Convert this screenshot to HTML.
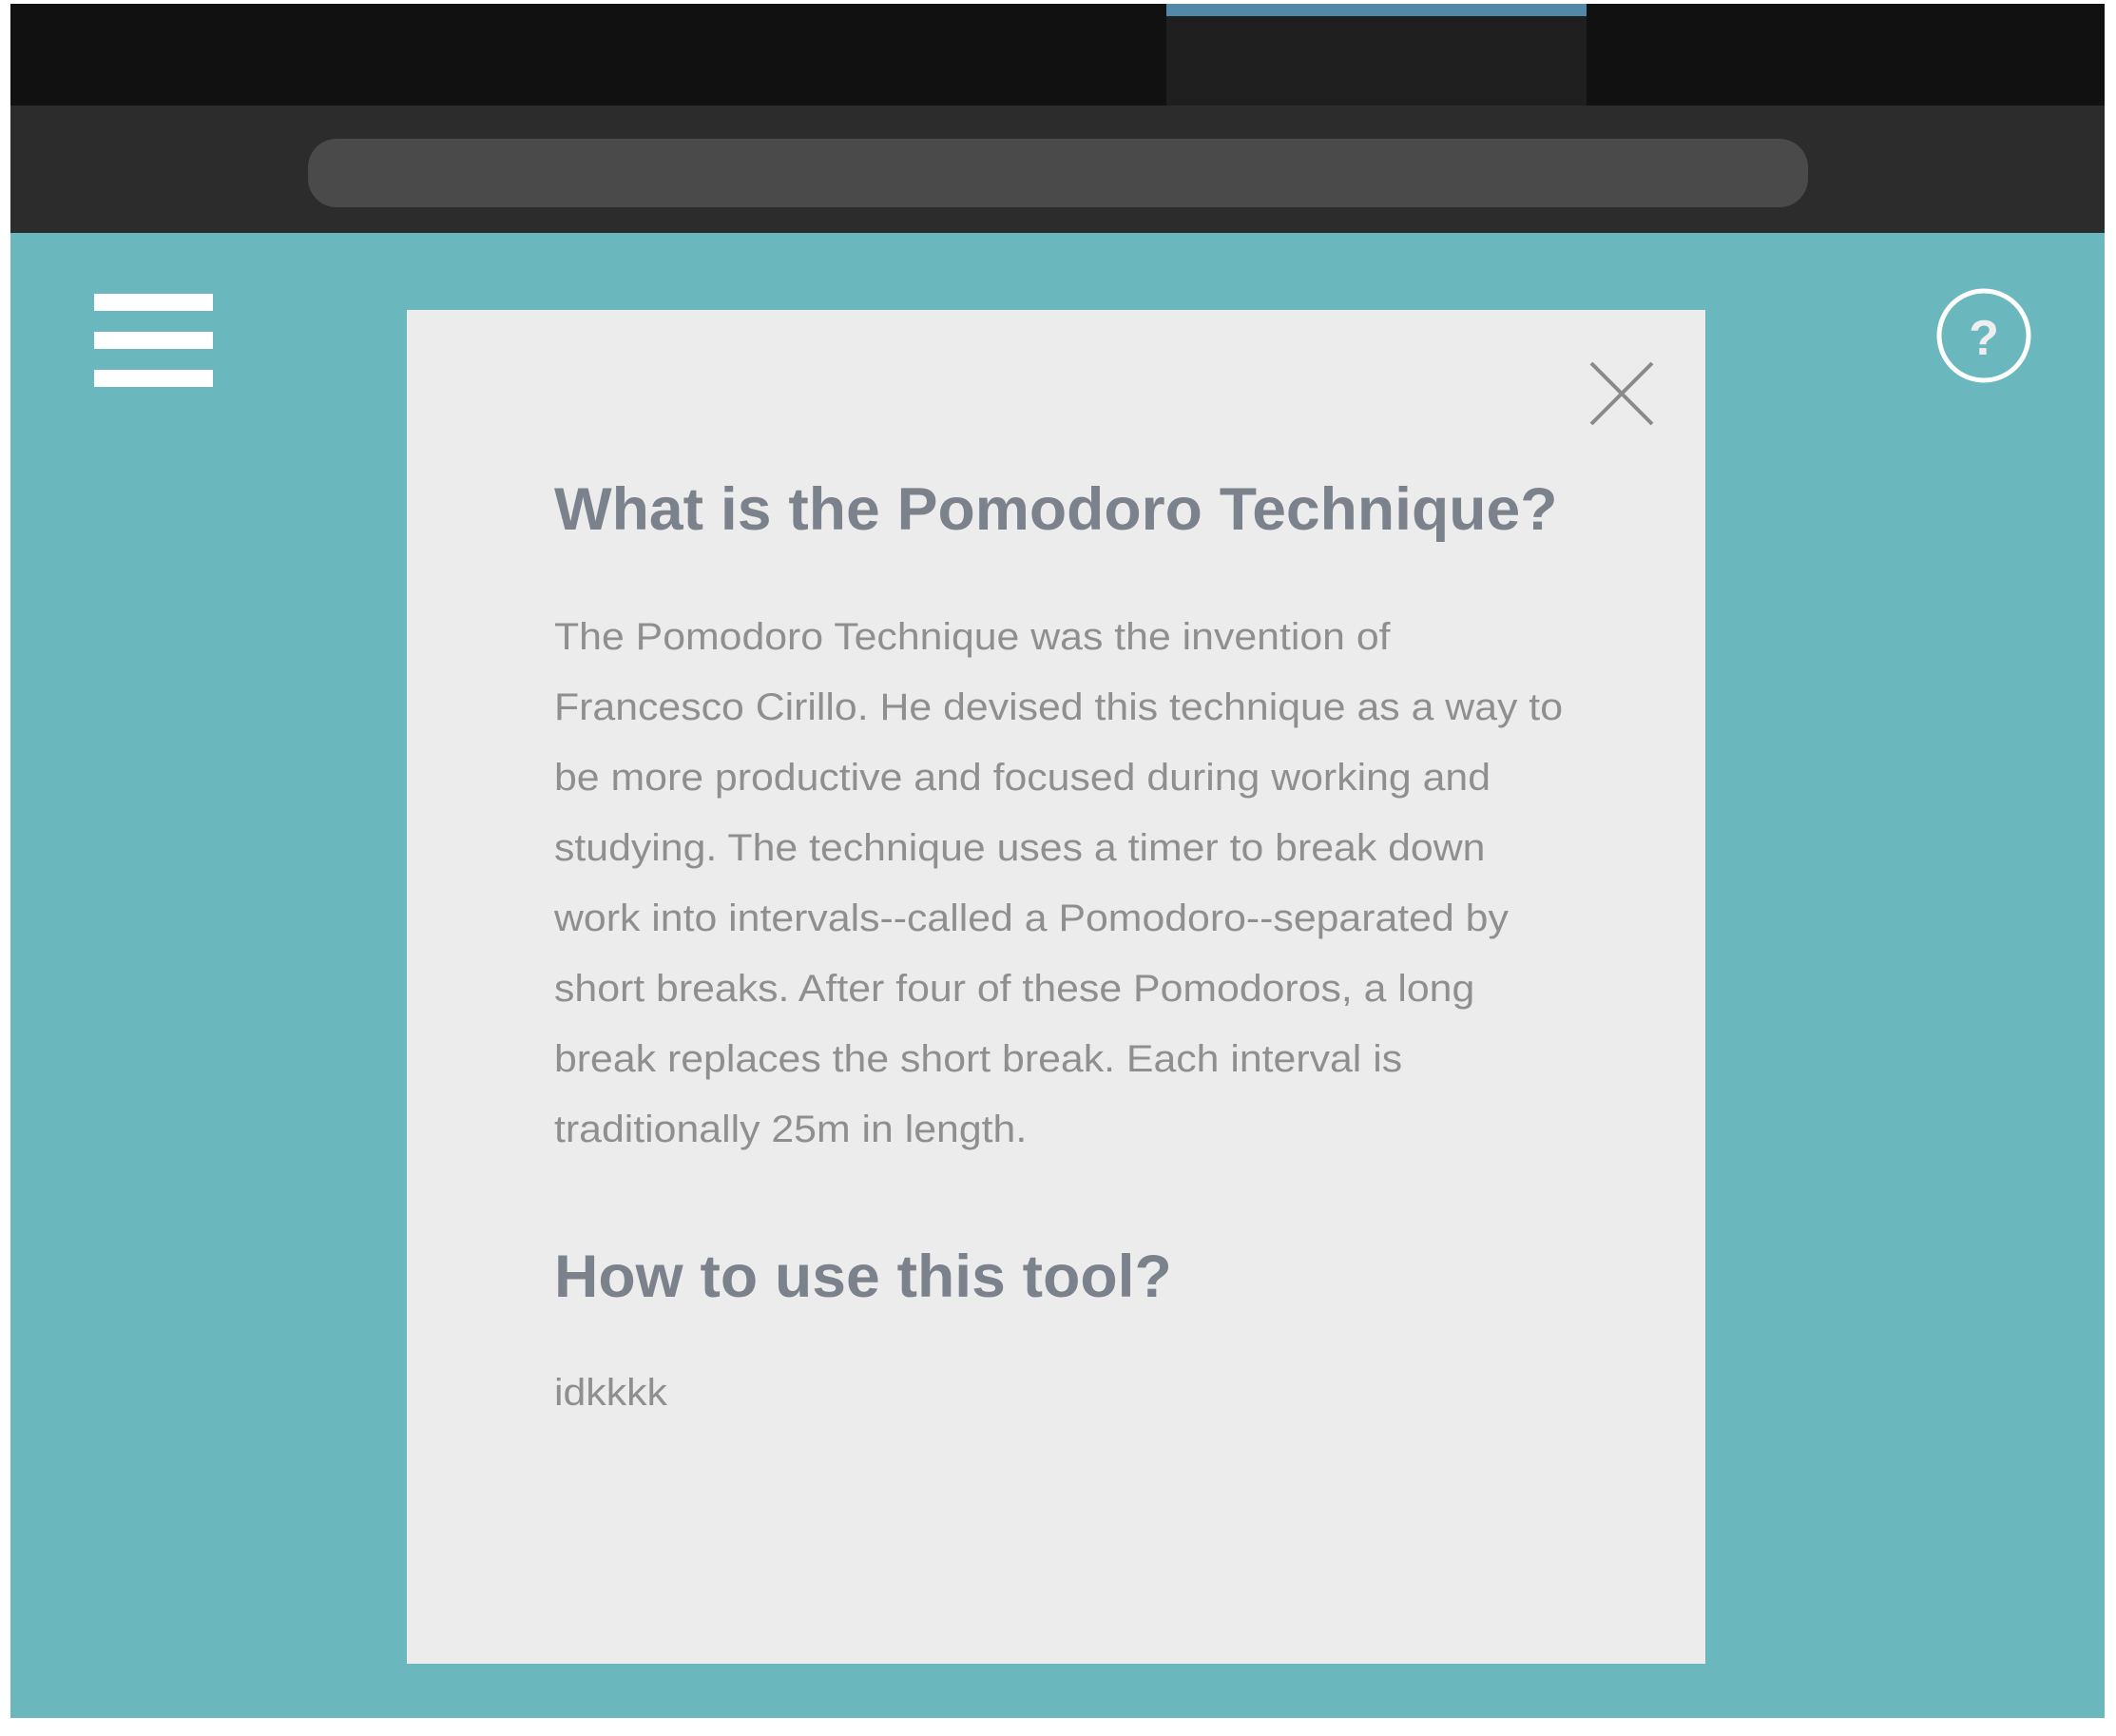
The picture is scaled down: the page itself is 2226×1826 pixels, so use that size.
<!DOCTYPE html>
<html><head><meta charset="utf-8"><style>
html,body{margin:0;padding:0;background:#fff;width:2226px;height:1826px;overflow:hidden;position:relative;font-family:"Liberation Sans",sans-serif}
div{position:absolute;box-sizing:border-box}
.t{white-space:nowrap;left:583px}
.b{font-size:40px;color:#8f8f8f;line-height:1;transform:scaleX(1.07);transform-origin:0 0}
.h{font-size:63px;color:#7b828c;font-weight:bold;line-height:1;transform-origin:0 0;transform:scaleX(1.02)}
</style></head><body>
<div style="left:11px;top:4px;width:2203px;height:107px;background:#111"></div>
<div style="left:1227px;top:4px;width:442px;height:107px;background:#1f1f1f"></div>
<div style="left:1227px;top:4px;width:442px;height:13px;background:#5389a8"></div>
<div style="left:11px;top:111px;width:2203px;height:134px;background:#2c2c2c"></div>
<div style="left:324px;top:146px;width:1578px;height:72px;background:#4a4a4a;border-radius:30px"></div>
<div style="left:11px;top:245px;width:2203px;height:1562px;background:#6ab8bd"></div>
<div style="left:99px;top:309px;width:125px;height:18px;background:#fff"></div>
<div style="left:99px;top:349px;width:125px;height:18px;background:#fff"></div>
<div style="left:99px;top:389px;width:125px;height:18px;background:#fff"></div>
<svg style="position:absolute;left:2035px;top:301px" width="104" height="104"><circle cx="52" cy="52" r="47" fill="none" stroke="#fff" stroke-width="5"/><text x="52" y="72" text-anchor="middle" font-family="Liberation Sans" font-weight="bold" font-size="52" fill="#eee">?</text></svg>
<div style="left:428px;top:326px;width:1366px;height:1424px;background:#ececec"></div>
<svg style="position:absolute;left:1670px;top:378px" width="72" height="72"><path d="M4 4L68 68M68 4L4 68" stroke="#8a8a8a" stroke-width="4"/></svg>
<div class="t h" style="top:505px">What is the Pomodoro Technique?</div>
<div class="t b" style="top:650px">The Pomodoro Technique was the invention of</div>
<div class="t b" style="top:724px">Francesco Cirillo. He devised this technique as a way to</div>
<div class="t b" style="top:798px">be more productive and focused during working and</div>
<div class="t b" style="top:872px">studying. The technique uses a timer to break down</div>
<div class="t b" style="top:946px">work into intervals--called a Pomodoro--separated by</div>
<div class="t b" style="top:1020px">short breaks. After four of these Pomodoros, a long</div>
<div class="t b" style="top:1094px">break replaces the short break. Each interval is</div>
<div class="t b" style="top:1168px">traditionally 25m in length.</div>
<div class="t h" style="top:1312px">How to use this tool?</div>
<div class="t b" style="top:1445px">idkkkk</div>
</body></html>
